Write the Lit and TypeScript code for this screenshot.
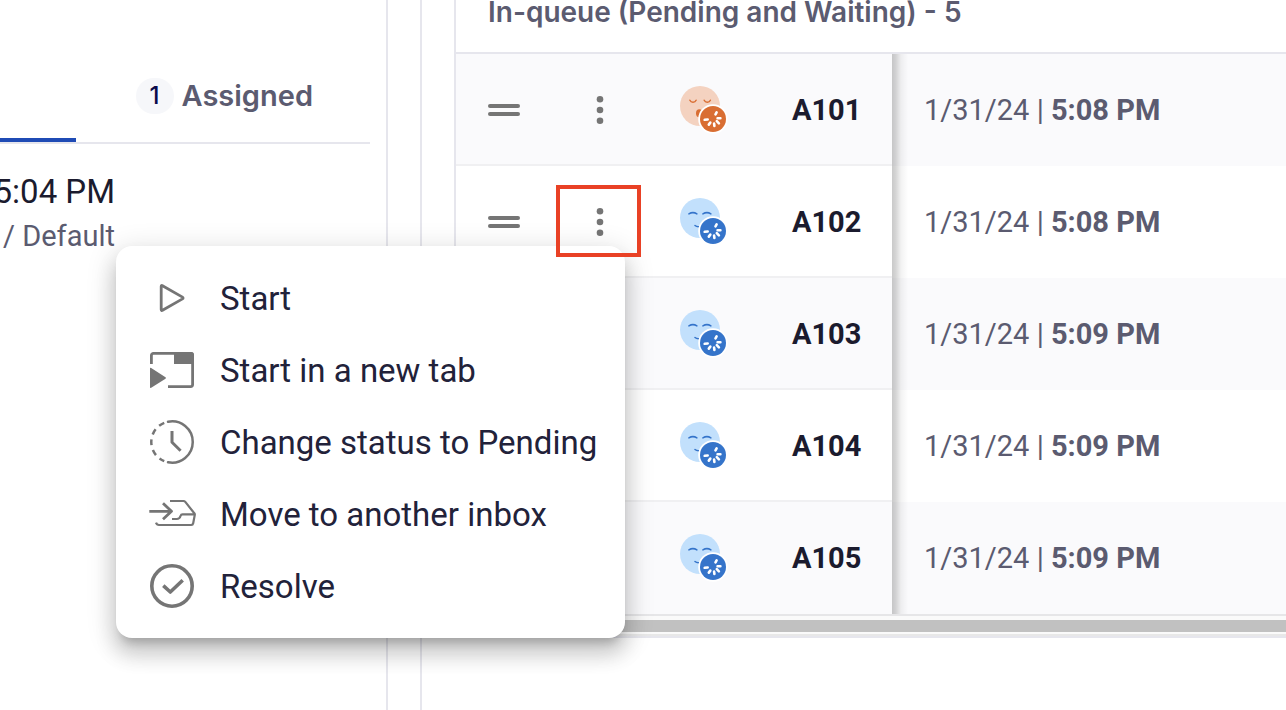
import { LitElement, html, css, svg, nothing } from "lit";
import { customElement, property } from "lit/decorators.js";

type Mood = "sleepy" | "calm";

interface Visit {
  id: string;
  date: string;
  time: string;
  mood: Mood;
  open?: boolean;
}

const visits: Visit[] = [
  { id: "A101", date: "1/31/24", time: "5:08 PM", mood: "sleepy" },
  { id: "A102", date: "1/31/24", time: "5:08 PM", mood: "calm", open: true },
  { id: "A103", date: "1/31/24", time: "5:09 PM", mood: "calm" },
  { id: "A104", date: "1/31/24", time: "5:09 PM", mood: "calm" },
  { id: "A105", date: "1/31/24", time: "5:09 PM", mood: "calm" },
];

const icons = {
  play: svg`<path d="M13.200 12.400v23.200c0 .8.6 1.100 1.300.7l20-11.400c.8-.5.8-1.300 0-1.800l-20-11.400c-.7-.4-1.300-.1-1.300.7z" stroke-width="2.800"/>`,
  tab: svg`<path d="M3.400 18V9.400a2 2 0 0 1 2-2h37.200a2 2 0 0 1 2 2v29.200a2 2 0 0 1-2 2H20" stroke-width="2.800"/><path class="solid" d="M26 6h17a3 3 0 0 1 3 3v9H26zM2 22.500c0-.6.6-.8 1.200-.5L17.500 31.300c.5.400.5 1 0 1.400L3.200 41.800c-.6.400-1.200.2-1.200-.5z"/>`,
  clock: svg`<path d="M20 3.700A20.700 20.700 0 1 1 20 44.300" stroke-width="2.500" stroke-linecap="round"/><path d="M16.250 4.800A20.700 20.700 0 0 0 16.250 43.200" stroke-width="2.500" stroke-dasharray="5.900 5"/><path d="M24 13v11.300l8.600 8.400" stroke-width="3"/>`,
  inbox: svg`<path d="M1.300 21.300H23M15 13.300l8.500 8-8.500 8" stroke-width="2.800"/><path d="M22 11h13.500c.8 0 1.300.3 1.800.9L46.500 23.500c.3.400.4.800.3 1.300l-1.600 8.500c-.2 1.100-.9 1.700-2 1.700H11c-1.600 0-2.500-.8-3-2.300M46 24.300H34.500c-1.300 0-1.700.7-2 1.700-.6 2-1.800 3-3.700 3H24" stroke-width="2.200"/>`,
  check: svg`<circle cx="24" cy="24" r="20.200" stroke-width="3.600"/><path d="M15.300 23.700l7 6.300 12.400-11.700" stroke-width="3.600"/>`,
};

const actions: { label: string; icon: keyof typeof icons }[] = [
  { label: "Start", icon: "play" },
  { label: "Start in a new tab", icon: "tab" },
  { label: "Change status to Pending", icon: "clock" },
  { label: "Move to another inbox", icon: "inbox" },
  { label: "Resolve", icon: "check" },
];

@customElement("mood-face")
class MoodFace extends LitElement {
  @property() mood: Mood = "calm";

  static styles = css`
    :host { display: block; width: 48px; height: 48px; }
    .face { display: block; fill: none; stroke-linecap: round; }
    .sleepy { --skin: #f4d2c0; --ink: #d96e33; }
    .calm { --skin: #c2e0fc; --ink: #3574ca; }
    .skin { fill: var(--skin); }
    .line { stroke: var(--ink); stroke-width: 1.5; }
    .ink { fill: var(--ink); }
    .ring { fill: #fff; }
    .rays { stroke: #fff; stroke-width: 2.6; }
  `;

  render() {
    const features = this.mood === "sleepy"
      ? svg`<path class="line" d="M9.900 14.300c1.200 2.600 5 2.600 6.200 0M24.200 14.300c1.200 2.600 5 2.600 6.200 0"/><ellipse class="ink" cx="19.300" cy="27.300" rx="3.300" ry="4"/>`
      : svg`<path class="line" d="M8.900 15.900c2.500-1.600 5.500-1.600 8 0M22.900 15.900c2.500-1.600 5.500-1.600 8 0M15 27.500c1.300 1.200 2.600 1.500 4.500 1.200"/>`;
    return html`<svg class="face ${this.mood}" width="48" height="48" viewBox="0 0 48 48" aria-hidden="true">
      <circle class="skin" cx="20" cy="20" r="20"></circle>
      ${features}
      <circle class="ring" cx="33" cy="33" r="14.800"></circle>
      <circle class="ink" cx="33" cy="33" r="13"></circle>
      <path class="rays" d="M36.600 26.400l-1.100 2M37.600 32.200h2.800M36.800 35.200l2.100 2.100M34.100 37.600l.3 2.400M30.300 36.600l-1.500 2M27.700 33.500l-3 .3"></path>
    </svg>`;
  }
}

@customElement("action-menu")
class ActionMenu extends LitElement {
  static styles = css`
    :host { display: block; }
    .menu {
      display: flex; flex-direction: column; padding: 16px 0;
      border-radius: 16px; background: #fff;
      box-shadow: 0 10px 10px -6px rgba(0,0,0,.2), 0 16px 20px 2px rgba(0,0,0,.14), 0 6px 28px 4px rgba(0,0,0,.12);
    }
    .item {
      display: flex; align-items: center; gap: 24px; height: 72px; padding: 0 32px;
      border: 0; background: none; text-align: left; white-space: nowrap; cursor: pointer;
      font: 400 33px/40px Roboto, sans-serif; color: #22223a;
    }
    .label { padding-top: 2px; }
    .icon { flex: none; fill: none; stroke: #757575; stroke-linecap: butt; stroke-linejoin: round; }
    .solid { fill: #757575; stroke: none; }
  `;

  render() {
    return html`<div class="menu" role="menu">
      ${actions.map((a) => html`<button class="item" role="menuitem">
        <svg class="icon" width="48" height="48" viewBox="0 0 48 48" aria-hidden="true">${icons[a.icon]}</svg>
        <span class="label">${a.label}</span>
      </button>`)}
    </div>`;
  }
}

@customElement("app-root")
class AppRoot extends LitElement {
  static styles = css`
    :host { display: block; font-family: Roboto, sans-serif; color: #5b5b70; }
    * { box-sizing: border-box; }
    .page {
      position: relative; display: grid; grid-template-columns: 388px minmax(0, 1fr); column-gap: 32px;
      min-height: 100vh; overflow: hidden; background: #fff;
    }
    .side { border-right: 2px solid #e6e6ed; padding: 50px 16px 0 0; }
    .tabs { display: flex; height: 94px; border-bottom: 2px solid #e6e6ed; }
    .current { width: 76px; border-bottom: 4px solid #1f4bb5; }
    .tab {
      flex: 1; display: flex; justify-content: flex-end; align-items: center; gap: 8px; padding: 0 57px 0 0;
      border: 0; background: none; font: 600 29px/36px Inter, sans-serif; color: #5b5b70; cursor: pointer;
    }
    .count {
      width: 38px; height: 36px; border-radius: 18px; background: #f6f7fa;
      font-size: 24px; font-weight: 500; color: #0b0b4b; text-align: center;
    }
    .visit { display: flex; flex-direction: column; align-items: flex-end; width: 115px; padding-top: 28px; white-space: nowrap; }
    .when { font-size: 33px; line-height: 40px; color: #1b1b2e; }
    .where { font-size: 29px; line-height: 48px; }
    .main { border-left: 2px solid #e6e6ed; padding-left: 32px; }
    .queue { border-left: 2px solid #e6e6ed; border-bottom: 2px solid #e6e6ed; }
    .title {
      margin: 0; padding: 0 32px 28px; border-bottom: 2px solid #e6e6ed;
      font: 600 28px/24px Inter, sans-serif; white-space: nowrap;
    }
    .table { width: 100%; border-collapse: separate; border-spacing: 0; table-layout: fixed; border-bottom: 2px solid #e6e6e8; }
    .row { height: 112px; background: #fff; }
    .row:nth-child(odd) { background: #fafafc; }
    .cell { padding: 0 0 0 32px; text-align: left; vertical-align: middle; font-size: 29px; line-height: 40px; font-weight: 400; white-space: nowrap; }
    .pinned { padding-top: 2px; border-bottom: 2px solid #f0f0f2; }
    .row:last-child .pinned { border-bottom-color: transparent; }
    .grip { width: 96px; }
    .more { width: 96px; padding-left: 24px; }
    .mood { width: 112px; }
    .id { width: 132px; font-weight: 700; color: #1b1b2e; }
    .date { background: linear-gradient(90deg, rgba(0,0,0,.21), rgba(0,0,0,.16) 4px, rgba(0,0,0,.05) 9px, transparent 16px) left / 16px 100% no-repeat; }
    .time { font-weight: 700; }
    .ctl { position: relative; display: block; padding: 0; border: 0; background: none; cursor: pointer; }
    .glyph { display: block; fill: #757575; }
    .focus { position: absolute; z-index: 3; left: -20px; top: -13px; width: 85px; height: 72px; border: 4px solid #e94125; }
    .track { padding: 4px 0 2px; background: #fafafa; border-bottom: 2px solid #e8e8e8; }
    .thumb { height: 12px; background: #c1c1c1; }
    .popup { position: absolute; z-index: 2; left: 116px; top: 246px; width: 509px; }
  `;

  row(v: Visit) {
    return html`<tr class="row">
      <td class="cell pinned grip">
        <button class="ctl" aria-label="Reorder ${v.id}">
          <svg class="glyph" width="32" height="48" viewBox="0 0 32 48"><rect y="18" width="32" height="4" rx="2"></rect><rect y="26" width="32" height="4" rx="2"></rect></svg>
        </button>
      </td>
      <td class="cell pinned more">
        <button class="ctl" aria-label="Actions for ${v.id}">
          <svg class="glyph" width="48" height="48" viewBox="0 0 48 48"><circle cx="24" cy="13.300" r="3.300"></circle><circle cx="24" cy="24" r="3.300"></circle><circle cx="24" cy="34.700" r="3.300"></circle></svg>
          ${v.open ? html`<span class="focus"></span>` : nothing}
        </button>
      </td>
      <td class="cell pinned mood"><mood-face mood=${v.mood}></mood-face></td>
      <th class="cell pinned id" scope="row">${v.id}</th>
      <td class="cell date">${v.date} | <span class="time">${v.time}</span></td>
    </tr>`;
  }

  render() {
    return html`<div class="page">
      <aside class="side">
        <div class="tabs">
          <div class="current"></div>
          <button class="tab"><span class="count">1</span><span>Assigned</span></button>
        </div>
        <div class="visit">
          <span class="when">5:04 PM</span>
          <span class="where">/ Default</span>
        </div>
      </aside>
      <main class="main">
        <section class="queue">
          <h2 class="title">In-queue (Pending and Waiting) - 5</h2>
          <table class="table"><tbody>${visits.map((v) => this.row(v))}</tbody></table>
          <div class="track"><div class="thumb"></div></div>
        </section>
      </main>
      <action-menu class="popup"></action-menu>
    </div>`;
  }
}
